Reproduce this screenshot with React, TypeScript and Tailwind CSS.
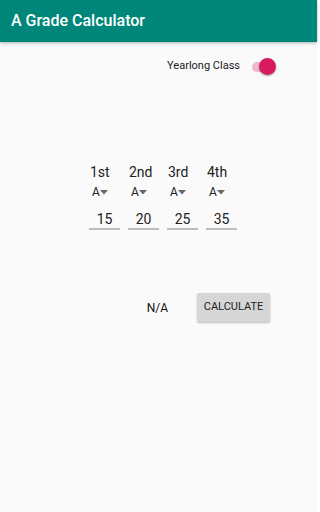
import React from "react";

const cols = [
  { label: "1st", val: "15" },
  { label: "2nd", val: "20" },
  { label: "3rd", val: "25" },
  { label: "4th", val: "35" },
];

export default function App() {
  return (
    <div className="w-[317px] h-[512px] bg-[#fafafa] flex flex-col" style={{ fontFamily: "Roboto, sans-serif" }}>
      <div className="h-[42px] bg-[#00877a] flex items-center pl-[11px] shadow-[0_1px_3px_rgba(0,0,0,0.3)] relative z-10">
        <span className="text-white text-[16px] font-medium">A Grade Calculator</span>
      </div>
      <div className="flex justify-end items-center pr-[41px] mt-[16px] h-[17px]">
        <span className="text-[11px] text-[#222] mr-[11px]">Yearlong Class</span>
        <div className="relative w-[25px] h-[16px] flex items-center">
          <div className="w-[20px] h-[10px] rounded-full bg-[#f0b8cc] ml-[1px]" />
          <div className="absolute right-0 top-[-1px] w-[17px] h-[17px] rounded-full bg-[#d81b60] shadow-[0_1px_2px_rgba(0,0,0,0.35)]" />
        </div>
      </div>
      <div className="flex justify-center mt-[89px] gap-[8px] pl-[9px]">
        {cols.map((c) => (
          <div key={c.label} className="w-[31px] flex flex-col">
            <span className="text-[14px] text-[#222] leading-[16px] pl-[1px]">{c.label}</span>
            <div className="flex items-center mt-[5px] h-[14px] pl-[3px]">
              <span className="text-[12px] text-[#222] leading-[14px]">A</span>
              <svg width="8" height="5" viewBox="0 0 8 5">
                <path d="M0 0h8L4 4.5z" fill="#666" />
              </svg>
            </div>
            <div className="mt-[11px] h-[20px] flex items-center justify-center text-[14px] text-[#222] border-b-[2px] border-[#bdbdbd]">
              {c.val}
            </div>
          </div>
        ))}
      </div>
      <div className="flex justify-end items-center pr-[47px] mt-[63px] gap-[29px]">
        <span className="text-[12px] text-[#111]">N/A</span>
        <div className="w-[73px] h-[29px] bg-[#d6d6d6] rounded-[2px] shadow-[0_1px_2px_rgba(0,0,0,0.25)] flex items-center justify-center text-[11px] text-[#222]">
          CALCULATE
        </div>
      </div>
    </div>
  );
}
